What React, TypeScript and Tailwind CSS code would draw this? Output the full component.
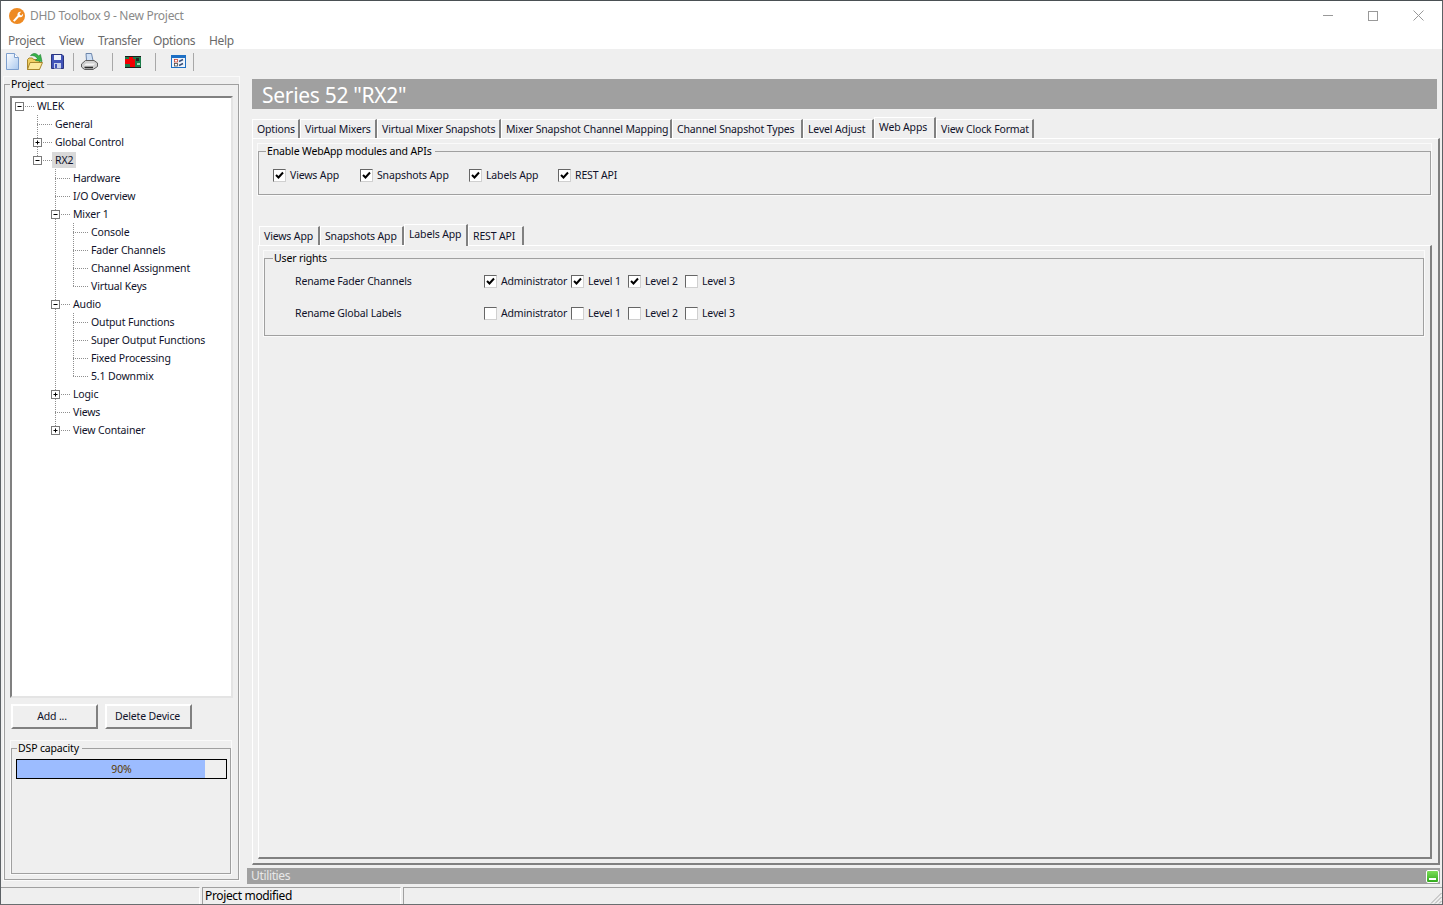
import { Fragment } from 'react';
import type { ReactNode } from 'react';

interface TreeRow { label: string; depth: number; toggle?: 'plus' | 'minus'; selected?: boolean }

const treeRows: TreeRow[] = [
  { label: 'WLEK', depth: 0, toggle: 'minus' },
  { label: 'General', depth: 1 },
  { label: 'Global Control', depth: 1, toggle: 'plus' },
  { label: 'RX2', depth: 1, toggle: 'minus', selected: true },
  { label: 'Hardware', depth: 2 },
  { label: 'I/O Overview', depth: 2 },
  { label: 'Mixer 1', depth: 2, toggle: 'minus' },
  { label: 'Console', depth: 3 },
  { label: 'Fader Channels', depth: 3 },
  { label: 'Channel Assignment', depth: 3 },
  { label: 'Virtual Keys', depth: 3 },
  { label: 'Audio', depth: 2, toggle: 'minus' },
  { label: 'Output Functions', depth: 3 },
  { label: 'Super Output Functions', depth: 3 },
  { label: 'Fixed Processing', depth: 3 },
  { label: '5.1 Downmix', depth: 3 },
  { label: 'Logic', depth: 2, toggle: 'plus' },
  { label: 'Views', depth: 2 },
  { label: 'View Container', depth: 2, toggle: 'plus' },
];

const menuItems = [
  { label: 'Project', width: 'w-[51px]' },
  { label: 'View', width: 'w-[39px]' },
  { label: 'Transfer', width: 'w-[55px]' },
  { label: 'Options', width: 'w-[56px]' },
  { label: 'Help', width: 'w-[30px]' },
];

// true when a later row continues the branch at this depth
function continues(index: number, depth: number) {
  for (let j = index + 1; j < treeRows.length; j++) {
    if (treeRows[j].depth < depth) return false;
    if (treeRows[j].depth === depth) return true;
  }
  return false;
}

function TreeGlyph({ row, index }: { row: TreeRow; index: number }) {
  const width = 22 + row.depth * 18;
  const cx = 7.5 + row.depth * 18;
  const dots = { stroke: '#8f8f8f', strokeDasharray: '1 1', fill: 'none' };
  return (
    <svg width={width} height={18} className="shrink-0">
      {Array.from({ length: row.depth }, (_, i) => i + 1).map(d => {
        const x = 7.5 + d * 18;
        if (d < row.depth) {
          return continues(index, d) ? <line key={d} x1={x} x2={x} y1={0} y2={18} {...dots} /> : null;
        }
        return <line key={d} x1={x} x2={x} y1={0} y2={continues(index, d) ? 18 : 9} {...dots} />;
      })}
      <line x1={cx - 0.5} x2={width} y1={9.5} y2={9.5} {...dots} />
      {row.toggle && (
        <Fragment>
          <rect x={cx - 4} y={5.5} width={8} height={8} fill="#fff" stroke="#7a7a7a" />
          <line x1={cx - 2} x2={cx + 2} y1={9.5} y2={9.5} stroke="#000" />
          {row.toggle === 'plus' && <line x1={cx} x2={cx} y1={7.5} y2={11.5} stroke="#000" />}
        </Fragment>
      )}
    </svg>
  );
}

function Group({ title, className, legendClass = 'ml-[5px]', children }: { title: string; className: string; legendClass?: string; children?: ReactNode }) {
  return (
    <fieldset className={`border border-[#a0a0a0] outline outline-white/70 min-w-0 ${className}`}>
      <legend className={`${legendClass} pr-[3px] pl-px h-[14px] leading-[14px] text-black`}>{title}</legend>
      {children}
    </fieldset>
  );
}

function Check({ label, checked, className = '' }: { label: string; checked?: boolean; className?: string }) {
  return (
    <label className={`flex items-center h-[16px] ${className}`}>
      <span className="w-[13px] h-[13px] shrink-0 bg-white border border-t-[#666666] border-l-[#666666] border-r-[#d0d0d0] border-b-[#d0d0d0] mr-[4px]">
        {checked && (
          <svg width={11} height={11} viewBox="0 0 11 11">
            <path d="M2 5 L4.5 7.5 L9 2.5" fill="none" stroke="#000" strokeWidth={2} />
          </svg>
        )}
      </span>
      <span className="pt-px whitespace-nowrap">{label}</span>
    </label>
  );
}

function Tab({ label, width, active }: { label: string; width: string; active?: boolean }) {
  return (
    <div
      className={`${width} shrink-0 border-r-2 border-r-[#808080] border-l border-l-white border-t border-t-white ${
        active ? 'h-[22px] -mt-[2px] pt-[2px] bg-[#efefef]' : 'h-[19px] pt-[2px]'
      } pl-[4px] leading-[15px] whitespace-nowrap`}
    >
      {label}
    </div>
  );
}

function ToolSep({ className }: { className: string }) {
  return <div className={`w-px h-[18px] bg-[#a8a8a8] ${className}`} />;
}

function Toolbar() {
  return (
    <div className="h-[25px] flex items-center pl-[5px]">
      {/* new */}
      <svg width={13} height={17} viewBox="0 0 13 17" className="mr-[8px]">
        <defs>
          <linearGradient id="pg" x1="0" y1="0" x2="1" y2="1">
            <stop offset="0" stopColor="#ffffff" /><stop offset="1" stopColor="#a9c8ef" />
          </linearGradient>
        </defs>
        <path d="M.5 .5 H8.5 L12.5 4.5 V16.5 H.5 Z" fill="url(#pg)" stroke="#7d9fce" />
        <path d="M8.5 .5 V4.5 H12.5" fill="#fff" stroke="#7d9fce" />
      </svg>
      {/* open */}
      <svg width={16} height={17} viewBox="0 0 16 17" className="mr-[8px]">
        <path d="M.5 16.5 V6.5 L2 5 H5.5 L6.5 6.5 H12.5 V16.5 Z" fill="#f0cf62" stroke="#a8862c" />
        <path d="M.5 16.5 L3 9.5 H15.5 L12.5 16.5 Z" fill="#fbe99a" stroke="#a8862c" />
        <path d="M3.5 2.5 C6.5 -.5 10 .2 11.5 3 L13.5 1.5 L15 8.5 L8.5 7.5 L10.3 5.6 C9 3.2 6.5 2.3 3.5 2.5 Z" fill="#38b44a" stroke="#1e7d30" strokeWidth={0.6} />
      </svg>
      {/* save */}
      <svg width={13} height={15} viewBox="0 0 13 15" className="mr-[9px]">
        <path d="M.5 .5 H11 L12.5 2 V14.5 H.5 Z" fill="#4254b8" stroke="#2a3580" />
        <rect x={3} y={1} width={7} height={5} fill="#eef2fb" />
        <rect x={3} y={9} width={7} height={5.5} fill="#c9d2ea" />
        <rect x={4} y={10} width={2} height={4} fill="#4254b8" />
      </svg>
      <ToolSep className="mr-[7px]" />
      {/* print */}
      <svg width={17} height={17} viewBox="0 0 17 17" className="mr-[14px]">
        <path d="M5 .5 H10.5 L12 7.5 H5.5 Z" fill="#cfe0f5" stroke="#6d86ab" />
        <path d="M.5 11 L4.5 7.5 H13 L16.5 10 V13.5 L12 16.5 H3.5 L.5 14 Z" fill="#d0d0d0" stroke="#5d5d5d" />
        <path d="M3 12.5 H12 L14.5 10.5 H5 Z" fill="#f4f4f4" />
        <path d="M3.5 14.5 H12" stroke="#2e2e2e" strokeWidth={1.6} />
      </svg>
      <ToolSep className="mr-[12px]" />
      {/* device */}
      <svg width={16} height={12} viewBox="0 0 16 12" className="mr-[14px]">
        <rect width={16} height={12} fill="#1c7d4a" />
        <rect x={0} y={0} width={16} height={1} fill="#1b1b1b" />
        <rect x={0} y={11} width={16} height={1} fill="#1b1b1b" />
        <path d="M0 3 H4 V1 H8 V3 H10 V11 H5 V8 H0 Z" fill="#f20000" />
        <rect x={11} y={2} width={3} height={3} fill="#242424" />
        <rect x={12} y={7} width={3} height={2} fill="#a9d6b4" />
      </svg>
      <ToolSep className="mr-[15px]" />
      {/* rights */}
      <svg width={15} height={13} viewBox="0 0 15 13" className="mr-[7px]">
        <rect x={.5} y={.5} width={14} height={12} fill="#eef3fa" stroke="#1d6fc4" />
        <rect x={1} y={1} width={13} height={2} fill="#1d6fc4" />
        <rect x={3.5} y={4.5} width={3} height={2.5} fill="#fff" stroke="#c8402e" strokeWidth={0.8} />
        <rect x={3.5} y={8.5} width={3} height={2.5} fill="#fff" stroke="#4a4a4a" strokeWidth={0.8} />
        <path d="M8 6.5 L12 4.5 M8 10.5 L12 8.5" stroke="#39507a" strokeWidth={1.4} />
      </svg>
      <ToolSep className="" />
    </div>
  );
}

export default function App() {
  return (
    <div className="w-[1443px] h-[905px] overflow-hidden bg-[#efefef] border-t border-x border-b border-x-[#5c6165] border-t-[#4a5054] border-b-[#6a6e70] flex flex-col text-[10.5px] tracking-[-0.15px] text-[#10122a] font-['Noto_Sans','Liberation_Sans',sans-serif]">
      {/* title bar */}
      <div className="h-[29px] shrink-0 bg-white flex items-center pl-[8px]">
        <svg width={16} height={16} viewBox="0 0 16 16" className="mr-[5px]">
          <circle cx={8} cy={8} r={8} fill="#ee8a22" />
          <path d="M4 12.5 L8.5 7.5 C8 5 10 3.2 12.3 3.8 L10.5 5.6 L11 7 L12.4 7.4 L14 5.7 C14.5 8 12.6 9.8 10 9 L5.5 13.8 Z" fill="#fff" />
        </svg>
        <span className="text-[12px] text-[#8a8a8a] tracking-[-0.28px]">DHD Toolbox 9 - New Project</span>
        <div className="ml-auto flex items-center">
          <div className="w-[10px] h-px bg-[#999] mr-[35px]" />
          <div className="w-[10px] h-[10px] border border-[#999] mr-[35px]" />
          <svg width={11} height={11} viewBox="0 0 11 11" className="mr-[18px]">
            <path d="M.5 .5 L10.5 10.5 M10.5 .5 L.5 10.5" stroke="#999" />
          </svg>
        </div>
      </div>
      {/* menu */}
      <div className="h-[19px] shrink-0 bg-white flex items-center pl-[7px] pt-[3px] text-[12px] tracking-[-0.35px] text-[#6a6a6a]">
        {menuItems.map(m => <span key={m.label} className={m.width}>{m.label}</span>)}
      </div>
      <Toolbar />

      <div className="flex-1 flex min-h-0">
        {/* left panel */}
        <div className="w-[246px] shrink-0 pl-[3px] pt-[3px]">
          <Group title="Project" className="w-[235px] h-[803px]">
            <div className="px-[5px] pt-[5px]">
              <div className="h-[602px] bg-white border-2 border-t-[#808080] border-l-[#808080] border-r-[#e4e4e4] border-b-[#e4e4e4]">
                <div className="-mt-px">
                  {treeRows.map((row, i) => (
                    <div key={row.label} className="h-[18px] flex items-center">
                      <TreeGlyph row={row} index={i} />
                      <span className={`h-[16px] leading-[16px] px-[3px] ${row.selected ? 'bg-[#d9d9d9]' : ''}`}>{row.label}</span>
                    </div>
                  ))}
                </div>
              </div>
              <div className="flex gap-[7px] mt-[6px] ml-px">
                <button className="w-[87px] h-[25px] border-2 border-t-white border-l-white border-r-[#808080] border-b-[#808080] pr-[5px]">Add ...</button>
                <button className="w-[87px] h-[25px] border-2 border-t-white border-l-white border-r-[#808080] border-b-[#808080] pr-[2px]">Delete Device</button>
              </div>
              <Group title="DSP capacity" className="w-[220px] h-[133px] mt-[12px] ml-px">
                <div className="pl-[4px] pr-[3px] pt-[4px]">
                  <div className="h-[20px] border border-black bg-[#efefef] relative">
                    <div className="h-full bg-[#9cbcff] w-[90%]" />
                    <span className="absolute inset-0 text-center leading-[18px] text-[#5a3a00]">90%</span>
                  </div>
                </div>
              </Group>
            </div>
          </Group>
        </div>

        {/* right side */}
        <div className="flex-1 min-w-0 flex flex-col">
          <div className="pl-[5px] pr-[5px] pt-[5px]">
            <div className="h-[30px] bg-[#a0a0a0] text-white text-[21px] tracking-[-0.3px] leading-[32px] pl-[10px]">Series 52 "RX2"</div>
          </div>
          <div className="flex h-[19px] mt-[10px] ml-[5px]">
            <Tab label="Options" width="w-[48px]" />
            <Tab label="Virtual Mixers" width="w-[77px]" />
            <Tab label="Virtual Mixer Snapshots" width="w-[124px]" />
            <Tab label="Mixer Snapshot Channel Mapping" width="w-[171px]" />
            <Tab label="Channel Snapshot Types" width="w-[131px]" />
            <Tab label="Level Adjust" width="w-[71px]" />
            <Tab label="Web Apps" width="w-[62px]" active />
            <Tab label="View Clock Format" width="w-[98px]" />
          </div>
          <div className="h-[728px] mr-[2px] ml-[5px] border-t border-t-white border-l border-l-white border-r-2 border-r-[#808080] border-b-2 border-b-[#808080] px-[5px] pt-[5px]">
            <Group title="Enable WebApp modules and APIs" legendClass="ml-[7px]" className="h-[51px] mr-[2px]">
              <div className="flex mt-[9px] pl-[14px]">
                <Check label="Views App" checked className="w-[87px]" />
                <Check label="Snapshots App" checked className="w-[109px]" />
                <Check label="Labels App" checked className="w-[89px]" />
                <Check label="REST API" checked />
              </div>
            </Group>
            <div className="flex h-[19px] mt-[31px] ml-[1px]">
              <Tab label="Views App" width="w-[61px]" />
              <Tab label="Snapshots App" width="w-[84px]" />
              <Tab label="Labels App" width="w-[64px]" active />
              <Tab label="REST API" width="w-[56px]" />
            </div>
            <div className="h-[614px] mr-[1px] border-t border-t-white border-l border-l-white border-r-2 border-r-[#808080] border-b-2 border-b-[#808080] px-[5px] pt-[5px]">
              <Group title="User rights" legendClass="ml-[8px]" className="h-[85px] mr-[1px]">
                <div className="pl-[30px]">
                  {[[true, true, true, false], [false, false, false, false]].map((row, r) => (
                    <div key={r} className={`flex items-center h-[16px] ${r === 0 ? 'mt-[8px]' : 'mt-[16px]'}`}>
                      <span className="w-[189px] pt-px">{r === 0 ? 'Rename Fader Channels' : 'Rename Global Labels'}</span>
                      <Check label="Administrator" checked={row[0]} className="w-[87px]" />
                      <Check label="Level 1" checked={row[1]} className="w-[57px]" />
                      <Check label="Level 2" checked={row[2]} className="w-[57px]" />
                      <Check label="Level 3" checked={row[3]} />
                    </div>
                  ))}
                </div>
              </Group>
            </div>
          </div>
          <div className="h-[16px] mt-[3px] mr-[2px] bg-[#a0a0a0] flex items-center pl-[4px] pr-[1px] text-[12px] tracking-[-0.35px] text-[#e8e8e8]">
            Utilities
            <svg width={13} height={13} viewBox="0 0 13 13" className="ml-auto">
              <defs>
                <linearGradient id="gb" x1="0" y1="0" x2="0" y2="1">
                  <stop offset="0" stopColor="#7fe05a" /><stop offset="1" stopColor="#2fa81c" />
                </linearGradient>
              </defs>
              <rect x={.5} y={.5} width={12} height={12} rx={1.5} fill="url(#gb)" stroke="#fff" />
              <rect x={3} y={8} width={7} height={2} fill="#fff" />
            </svg>
          </div>
        </div>
      </div>

      {/* status bar */}
      <div className="h-[17px] shrink-0 flex mt-[3px] gap-[2px] text-[12px] tracking-[-0.35px] leading-[16px] text-black">
        <div className="w-[199px] border-t border-t-[#a0a0a0] border-r border-r-white" />
        <div className="w-[199px] border-t border-t-[#a0a0a0] border-l border-l-[#a0a0a0] border-r border-r-white pl-[2px]">Project modified</div>
        <div className="flex-1 border-t border-t-[#a0a0a0] border-l border-l-[#a0a0a0] flex justify-end items-end">
          <svg width={12} height={12} viewBox="0 0 12 12">
            <path d="M11.5 1 L1 11.5 M11.5 5 L5 11.5 M11.5 9 L9 11.5" stroke="#a8a8a8" />
          </svg>
        </div>
      </div>
    </div>
  );
}
